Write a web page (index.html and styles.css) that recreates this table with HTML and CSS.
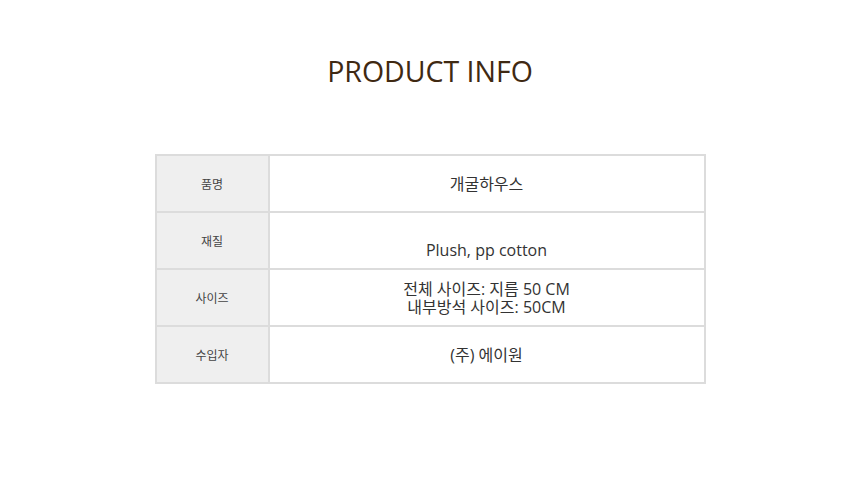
FILE: index.html
```html
<!DOCTYPE html>
<html lang="ko">
<head>
<meta charset="utf-8">
<link rel="stylesheet" href="styles.css">
</head>
<body>
<div class="page">
  <h1 class="title">PRODUCT INFO</h1>
  <table class="info">
    <tr><th>품명</th><td>개굴하우스</td></tr>
    <tr><th>재질</th><td><br>Plush, pp cotton</td></tr>
    <tr><th>사이즈</th><td><span class="line">전체 사이즈: 지름 50 CM</span><span class="line">내부방석 사이즈: 50CM</span></td></tr>
    <tr><th>수입자</th><td>(주) 에이원</td></tr>
  </table>
</div>
</body>
</html>
```
FILE: styles.css
```css
html, body { margin: 0; padding: 0; background: #fff; }
body { font-family: "Open Sans", "Noto Sans CJK KR", sans-serif; color: #333; }
.page { width: 860px; display: flex; flex-direction: column; align-items: center; }
.title {
  margin: 51px 0 0;
  font-size: 28.5px;
  font-weight: 500;
  color: #3f2912;
  line-height: 40px;
  letter-spacing: 0;
}
.info {
  margin-top: 63px;
  width: 551px;
  border-collapse: collapse;
  border: 2px solid #dcdcdc;
}
.info th, .info td {
  border: 2px solid #dcdcdc;
  height: 55px;
  text-align: center;
  vertical-align: middle;
  padding: 0;
  line-height: 18px;
}
.info th {
  width: 111px;
  background: #efefef;
  font-weight: 400;
  font-size: 12px;
  color: #444;
  font-family: "Noto Sans CJK KR", sans-serif;
}
.info td {
  font-size: 16px;
  color: #333;
}
.line {
  display: block;
  height: 18px;
  line-height: 18px;
}
```
